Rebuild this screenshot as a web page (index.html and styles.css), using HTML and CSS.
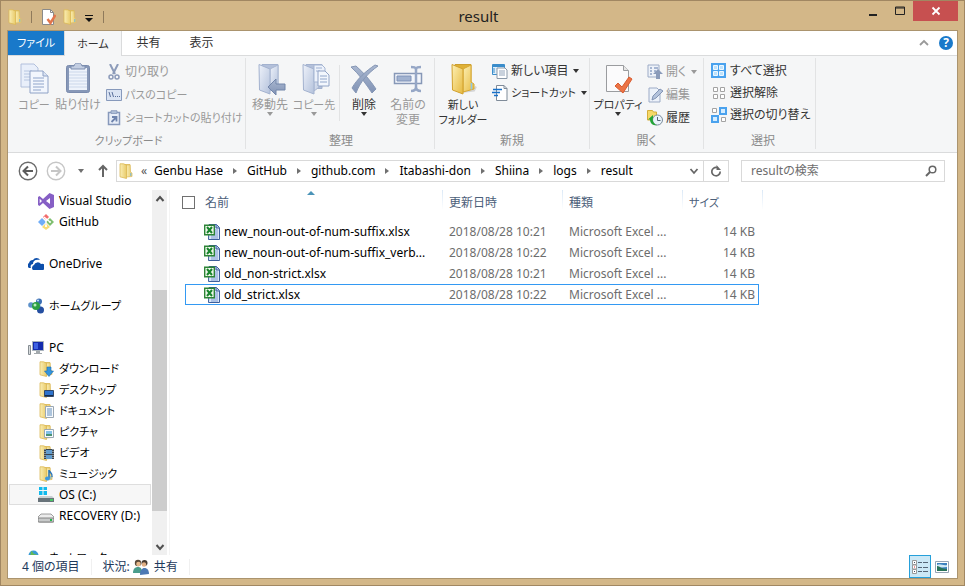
FILE: index.html
```html
<!DOCTYPE html>
<html lang="ja">
<head>
<meta charset="utf-8">
<title>result</title>
<link rel="stylesheet" href="styles.css">
</head>
<body>
<svg class="defs" aria-hidden="true">
  <defs>
    <linearGradient id="gold" x1="0" y1="0" x2="1" y2="1"><stop offset="0" stop-color="#fdf0b4"/><stop offset="1" stop-color="#e6b93f"/></linearGradient>
    <linearGradient id="lemon" x1="0" y1="0" x2="1" y2="0"><stop offset="0" stop-color="#faeeb6"/><stop offset="1" stop-color="#e9cb6a"/></linearGradient>
    <linearGradient id="pale" x1="0" y1="0" x2="1" y2="1"><stop offset="0" stop-color="#eef2fa"/><stop offset="1" stop-color="#b4c2dc"/></linearGradient>
    <linearGradient id="steel" x1="0" y1="0" x2="0" y2="1"><stop offset="0" stop-color="#a9b7d0"/><stop offset="1" stop-color="#8193b5"/></linearGradient>
    <symbol id="folder" viewBox="0 0 16 16">
      <path d="M5 1.500h7v11.500H6z" fill="#e9cb6a" stroke="#d9b650" stroke-width=".8"/>
      <path d="M12 2l.5 7 1.500 1v3.500L8 14V2z" fill="url(#lemon)" stroke="#dfc06a" stroke-width=".8"/>
      <path d="M2 .8h3.500L8.500 2v13.500L2 13.800z" fill="url(#lemon)" stroke="#dcb956" stroke-width=".8"/>
      <path d="M12.800 10v3" stroke="#6fb7e2"/>
    </symbol>
    <symbol id="bigfolder" viewBox="0 0 32 32">
      <path d="M14 29l13-1.500 2-4" fill="none" stroke="#d4d5d6" stroke-width="2"/>
      <path d="M8 1.500h16v22H13z" fill="#dfb136" stroke="#cc9e2f"/>
      <path d="M24 2v17l3 2v5l-11 3V6z" fill="url(#gold)" stroke="#d8a832"/>
      <path d="M5 1.500L16 6v25L5.500 27z" fill="url(#gold)" stroke="#d2a12d"/>
      <path d="M24.500 20v6.500" stroke="#8ac7e8" stroke-width="1.500"/>
    </symbol>
    <symbol id="palefolder" viewBox="0 0 32 32">
      <path d="M8 1.500h16v24H13z" fill="#b3c0da" stroke="#a3b2cf"/>
      <path d="M24 2v20l-8 6V6z" fill="url(#pale)" stroke="#a9b7d2"/>
      <path d="M5 1.500L16 6v25L5.500 27z" fill="url(#pale)" stroke="#a3b2cf"/>
    </symbol>
    <symbol id="excel" viewBox="0 0 16 16">
      <path d="M5 .5h7.500l3 3v12H4.500z" fill="#dbe7fa" stroke="#3d5f9b"/>
      <path d="M12 .5v3.500h3" fill="#a9c1e8" stroke="#3d5f9b"/>
      <path d="M11 6h3M11 8h3M11 10h3M7 12h7M7 14h7" stroke="#7f9dd0"/>
      <path d="M.7 1.200h9.600v9.600H.7z" fill="#f2f9ee" stroke="#2d8437" stroke-width="1.400"/>
      <path d="M3 3l5 6M8 3L3 9" stroke="#18842c" stroke-width="2"/>
    </symbol>
  </defs>
</svg>
<div class="window">
  <header class="titlebar">
    <div class="quick">
      <svg class="i16" viewBox="0 0 16 16"><use href="#folder"/></svg>
      <span class="tick"></span>
      <button aria-label="プロパティ"><svg class="i16" viewBox="0 0 16 16"><path d="M2.500 .5h8l3 3v12h-11z" fill="#fff" stroke="#8a8a8a"/><path d="M10.500 .5v3h3" fill="none" stroke="#8a8a8a"/><path d="M7.500 10l3 4 5-8" fill="none" stroke="#e2764c" stroke-width="2.500"/></svg></button>
      <button aria-label="新しいフォルダー"><svg class="i16" viewBox="0 0 16 16"><use href="#folder"/></svg></button>
      <button aria-label="カスタマイズ"><svg class="qarrow" viewBox="0 0 8 8"><path d="M0 1.500h8" stroke="#111"/><path d="M0 4h8L4 8z" fill="#111"/></svg></button>
      <span class="tick"></span>
    </div>
    <h1>result</h1>
    <div class="controls">
      <button aria-label="最小化"><svg viewBox="0 0 10 10"><path d="M1 9h8" stroke="#222" stroke-width="2"/></svg></button>
      <button aria-label="最大化"><svg viewBox="0 0 10 10"><path d="M.5 1h9v7.500h-9z" fill="none" stroke="#222"/><path d="M0 2h10" stroke="#222"/></svg></button>
      <button class="close" aria-label="閉じる"><svg viewBox="0 0 10 10"><path d="M1.500 1.500l7 7M8.500 1.500l-7 7" stroke="#fff" stroke-width="1.800"/></svg></button>
    </div>
  </header>

  <div class="client">
    <nav class="tabs">
      <button class="tab file">ファイル</button>
      <button class="tab current">ホーム</button>
      <button class="tab">共有</button>
      <button class="tab">表示</button>
      <span class="grow"></span>
      <button class="mini" aria-label="リボンの最小化"><svg viewBox="0 0 10 10"><path d="M1 7l4-4 4 4" fill="none" stroke="#999" stroke-width="1.800"/></svg></button>
      <button class="help" aria-label="ヘルプ">?</button>
    </nav>

    <div class="ribbon">
      <section class="group g-clip">
        <div class="tools">
          <button class="big off kana"><svg viewBox="0 0 32 32"><path d="M3 1h13l4 4v19H3z" fill="#e9effa" stroke="#b2c0dc"/><path d="M6 8h8M6 11h6M6 14h6M6 17h6" stroke="#b6c5e0"/><path d="M12 8h13l5 5v17H12z" fill="#f2f6fd" stroke="#8fa2c6"/><path d="M25 8v5h5" fill="#dbe4f3" stroke="#8fa2c6"/><path d="M15 15h11M15 18h11M15 21h11M15 24h11M15 27h8" stroke="#8fa4ca"/></svg><span>コピー</span></button>
          <button class="big off"><svg viewBox="0 0 32 32"><rect x="4.500" y="2.500" width="23" height="27" rx="2" fill="#8798b8" stroke="#7a8bad"/><path d="M7 5h18v22H7z" fill="#eef3fb"/><path d="M7 9h18M7 12h18M7 15h18M7 18h18M7 21h18M7 24h18" stroke="#cbd7ea"/><path d="M9 3h3c0-4 8-4 8 0h3v3H9z" fill="#c3cee2" stroke="#7f90b1"/></svg><span>貼り付け</span></button>
          <div class="stack">
            <button class="small off"><svg viewBox="0 0 16 16"><path d="M4 0l5 10M12 0L7 10" stroke="#8c9bb9" stroke-width="2"/><circle cx="5" cy="13" r="2" fill="none" stroke="#8c9bb9" stroke-width="1.500"/><circle cx="11" cy="13" r="2" fill="none" stroke="#8c9bb9" stroke-width="1.500"/></svg>切り取り</button>
            <button class="small off kana"><svg viewBox="0 0 16 16"><path d="M.5 2.500h15v11H.5z" fill="#dbe4f3" stroke="#8799bb"/><path d="M3 5l1.500 5M6 5l1.500 5" stroke="#596f9b"/><path d="M9 9.500h1M11 9.500h1M13 9.500h1" stroke="#596f9b"/></svg>パスのコピー</button>
            <button class="small off kana"><svg viewBox="0 0 16 16"><path d="M2.500 2.500h11v12h-11z" fill="#e8eef8" stroke="#8799bb" stroke-width="1.500"/><path d="M5 .8h6v2.500H5z" fill="#bac8df" stroke="#8799bb"/><path d="M5.500 12L10 7.500M6 7h4.500v4.500" fill="none" stroke="#6e83ad" stroke-width="1.800"/></svg>ショートカットの貼り付け</button>
          </div>
        </div>
        <h2>クリップボード</h2>
      </section>

      <section class="group g-org">
        <div class="tools">
          <button class="big off"><svg viewBox="0 0 32 32"><use href="#palefolder"/><path d="M14 24l8-8v5h9v6h-9v5z" fill="url(#steel)" stroke="#7386aa"/></svg><span>移動先</span><i class="caret"></i></button>
          <button class="big off kana"><svg viewBox="0 0 32 32"><use href="#palefolder"/><path d="M16 2h8l3 3v14H16z" fill="#edf2fb" stroke="#a5b5d2"/><path d="M18 5h6M18 8h4" stroke="#9fb1d2"/><path d="M20 8h7l4 4v11H20z" fill="#f3f7fd" stroke="#92a4c6"/><path d="M22 13h7M22 16h7M22 19h7" stroke="#91a6ca"/></svg><span>コピー先</span><i class="caret"></i></button>
          <span class="rule"></span>
          <button class="big"><svg viewBox="0 0 32 32"><path d="M3 4l5-1c8 7 14 14 20 23l-4 4C18 21 11 11 3 4z" fill="url(#steel)" stroke="#8697b5"/><path d="M30 3l-3-1C18 8 9 16 4 25l4 5C12 19 20 10 30 3z" fill="url(#steel)" stroke="#8697b5"/></svg><span>削除</span><i class="caret"></i></button>
          <button class="big off"><svg viewBox="0 0 32 32"><path d="M2.500 10.500h27v10h-27z" fill="#f3f6fb" stroke="#8798b7" stroke-width="1.500"/><path d="M5 13h14v5H5z" fill="#a1b2d0" stroke="#7e92b8"/><path d="M19 4c3 0 5 0 5 3v17c0 3-2 4-5 4M29 4c-3 0-5 0-5 3v17c0 3 2 4 5 4" fill="none" stroke="#96a7c6" stroke-width="2.500"/></svg><span>名前の<br>変更</span></button>
        </div>
        <h2>整理</h2>
      </section>

      <section class="group g-new">
        <div class="tools">
          <button class="big kana"><svg viewBox="0 0 32 32"><use href="#bigfolder"/></svg><span>新しい<br>フォルダー</span></button>
          <div class="stack tight">
            <button class="small"><svg viewBox="0 0 16 16"><path d="M.5 1.500h12v10H.5z" fill="#e0f0fb" stroke="#3a8dcb"/><path d="M1 3h12" stroke="#3a8dcb" stroke-width="2"/><path d="M2 5v5" stroke="#3a8dcb"/><path d="M5 5h8l2 2v8.500H5z" fill="#fff" stroke="#8a98a8"/><path d="M7 8h6M7 10h6M7 12h6" stroke="#92a3b9"/></svg>新しい項目<i class="caret"></i></button>
            <button class="small kana"><svg viewBox="0 0 16 16"><path d="M4.500 .5h7.500l3 3v12H4.500z" fill="#fff" stroke="#7f8b99"/><path d="M12 .5v3h3" fill="none" stroke="#7f8b99"/><path d="M1 4.500h9M0 7.500h8M2 10.500h4" stroke="#1871c9" stroke-width="1.500"/></svg>ショートカット<i class="caret"></i></button>
          </div>
        </div>
        <h2>新規</h2>
      </section>

      <section class="group g-open">
        <div class="tools">
          <button class="big kana"><svg viewBox="0 0 32 32"><path d="M4.500 2.500h17l5 5v21h-22z" fill="#fbfbfc" stroke="#9a9c9f"/><path d="M21.500 2.500v5h5" fill="#e6e6e6" stroke="#9a9c9f"/><path d="M13 23l3-3 4 4 7-10 3 2-9 14z" fill="#ec7446" stroke="#d95c30"/></svg><span>プロパティ</span><i class="caret"></i></button>
          <div class="stack">
            <button class="small off"><svg viewBox="0 0 16 16"><path d="M1 1h11v12H1z" fill="#eef2f9" stroke="#9cabc6"/><path d="M3 4h2M7 4h4M3 7h2M7 7h2M3 10h2" stroke="#8fa2c5" stroke-width="1.500"/><path d="M11 5l5 5h-3v5H9v-5H6z" fill="#8a9bba"/></svg>開く<i class="caret"></i></button>
            <button class="small off"><svg viewBox="0 0 16 16"><path d="M2 1h8l3 3v11H2z" fill="#edf2fa" stroke="#9cabc6"/><path d="M5 13l1-4 7-7 3 2-7 7z" fill="#b4c3dc" stroke="#8294b5"/></svg>編集</button>
            <button class="small"><svg viewBox="0 0 16 16"><path d="M.5 .5h5l1 1.500h3v8h-9z" fill="#f6d968" stroke="#d4ad3a"/><circle cx="10.500" cy="10" r="5" fill="#eaf3fb" stroke="#7b8b9a"/><path d="M10.500 7v3.500h3" fill="none" stroke="#567"/><path d="M6 5v3c-1 3 1 6 4 7.500-5 0-7-3-7-6H1z" fill="#23a536"/></svg>履歴</button>
          </div>
        </div>
        <h2>開く</h2>
      </section>

      <section class="group g-sel">
        <div class="tools">
          <div class="stack tight">
            <button class="small"><svg viewBox="0 0 16 16"><path d="M0 0h15v15H0z" fill="#4aa2ee"/><path d="M2.500 2.500h4v4h-4zM8.500 2.500h4v4h-4zM2.500 8.500h4v4h-4zM8.500 8.500h4v4h-4z" fill="#bfe2fb" stroke="#eef8ff"/></svg>すべて選択</button>
            <button class="small"><svg viewBox="0 0 16 16"><path d="M2.500 2.500h4v4h-4zM9.500 2.500h4v4h-4zM2.500 9.500h4v4h-4zM9.500 9.500h4v4h-4z" fill="#fff" stroke="#a3a3a3"/></svg>選択解除</button>
            <button class="small"><svg viewBox="0 0 16 16"><path d="M1.500 1.500h4v4h-4zM10.500 10.500h4v4h-4z" fill="#fff" stroke="#a3a3a3"/><path d="M9 1h6v6H9zM1 9h6v6H1z" fill="#d5edff" stroke="#4aa2ee" stroke-width="2"/></svg>選択の切り替え</button>
          </div>
        </div>
        <h2>選択</h2>
      </section>
    </div>

    <div class="navbar">
      <button class="nav" aria-label="戻る"><svg viewBox="0 0 20 20"><circle cx="10" cy="10" r="8.700" fill="none" stroke="#6a6a6a" stroke-width="1.400"/><path d="M15 10H6M10 5.500L5.500 10l4.500 4.500" fill="none" stroke="#5c5c5c" stroke-width="2"/></svg></button>
      <button class="nav" aria-label="進む"><svg viewBox="0 0 20 20"><circle cx="10" cy="10" r="8.700" fill="none" stroke="#c6c6c6" stroke-width="1.400"/><path d="M5 10h9M10 5.500l4.500 4.500-4.500 4.500" fill="none" stroke="#c6c6c6" stroke-width="2"/></svg></button>
      <button class="hist" aria-label="最近表示した場所"><i class="caret"></i></button>
      <button class="up" aria-label="上へ"><svg viewBox="0 0 12 14"><path d="M6 13V2M2 6l4-4 4 4" fill="none" stroke="#666" stroke-width="2"/></svg></button>
      <div class="address">
        <svg class="i16" viewBox="0 0 16 16"><use href="#folder"/></svg>
        <span class="more">«</span>
        <ol class="crumbs">
          <li><a href="#">Genbu Hase</a></li><li><a href="#">GitHub</a></li><li><a href="#">github.com</a></li><li><a href="#">Itabashi-don</a></li><li><a href="#">Shiina</a></li><li><a href="#">logs</a></li><li><a href="#">result</a></li>
        </ol>
        <button class="drop" aria-label="履歴"><svg viewBox="0 0 10 10"><path d="M1.500 3L5 7l3.500-4" fill="none" stroke="#666" stroke-width="1.800"/></svg></button>
        <button class="reload" aria-label="更新"><svg viewBox="0 0 12 12"><path d="M7 2.500A4.200 4.200 0 1 0 10.200 6.500" fill="none" stroke="#666" stroke-width="1.700"/><path d="M6.500 0v5H11z" fill="#666"/></svg></button>
      </div>
      <label class="search">
        <input type="search" placeholder="resultの検索" aria-label="resultの検索">
        <svg viewBox="0 0 12 12"><circle cx="7.500" cy="4.500" r="3.300" fill="none" stroke="#666" stroke-width="1.500"/><path d="M5 7L1 11" stroke="#666" stroke-width="2"/></svg>
      </label>
    </div>

    <div class="main">
      <nav class="side">
        <ul class="tree">
          <li class="sub"><svg viewBox="0 0 16 16"><path d="M11.500 0L16 2v12l-4.500 2L5 10l-3.500 3L0 12V4l1.500-1L5 6zM1.700 5.800v4.400L4 8zM12 5L8 8l4 3z" fill="#865fc5" fill-rule="evenodd"/></svg>Visual Studio</li>
          <li class="sub"><svg viewBox="0 0 16 16"><path d="M8 0l3 3-3 3-3-3z" fill="#f26d6d"/><path d="M4 4l4 4-4 4-4-4z" fill="#70adf8"/><path d="M12 4l4 4-4 4-4-4z" fill="#7fbf70"/><path d="M8 9l4 4-4 3-4-3z" fill="#f8dc76"/><path d="M6 3l6 5M8 5v8" stroke="#fff" stroke-width="1.200"/><circle cx="8" cy="12" r="1" fill="#fff"/><circle cx="12" cy="8" r="1" fill="#fff"/></svg>GitHub</li>
          <li class="space"></li>
          <li><svg viewBox="0 0 16 16"><path d="M1 12a3 3 0 0 1 0-5 4 4 0 0 1 4-3 4 4 0 0 1 7 0c-5-1-7 1-7 4-2 0-3 2-2 4z" fill="#0c4eab"/><path d="M5 14a3 3 0 0 1 1-5 4 4 0 0 1 7-1 3 3 0 0 1 2 6z" fill="#0c4eab"/></svg>OneDrive</li>
          <li class="space"></li>
          <li class="kana"><svg viewBox="0 0 16 16"><path d="M3 8l8-5 2 9z" fill="none" stroke="#b6d7ee" stroke-width="2"/><circle cx="11" cy="3.500" r="3" fill="#3b6fb4"/><circle cx="3" cy="7" r="2.800" fill="#5d91ca"/><circle cx="12.500" cy="12" r="3.500" fill="#254fa1"/><circle cx="8" cy="8" r="4" fill="#2d9f43"/><circle cx="7" cy="7" r="1.500" fill="#b9edbe"/><circle cx="10" cy="2.500" r="1" fill="#c7e3fa"/></svg>ホームグループ</li>
          <li class="space"></li>
          <li><svg viewBox="0 0 16 16"><path d="M4.500 1.500h11v9h-11z" fill="#142bad" stroke="#a9b3bb"/><path d="M6 3h4v6H6z" fill="#3e60e1"/><path d="M8 11h4v2h2v1H6v-1h2z" fill="#a3a9ad"/><path d="M.5 5.500h2v9h-2z" fill="#d9dddf" stroke="#868d92"/></svg>PC</li>
          <li class="sub kana"><svg viewBox="0 0 16 16"><use href="#folder"/><path d="M9 6h4v4h2.500L11 15.500 6.500 10H9z" fill="#3695dc" stroke="#1d6eb4" stroke-width=".6"/></svg>ダウンロード</li>
          <li class="sub kana"><svg viewBox="0 0 16 16"><use href="#folder"/><path d="M6.500 8.500h9v6h-9z" fill="#2e73cd" stroke="#344a68"/><path d="M7 13.500h8" stroke="#172d4b"/></svg>デスクトップ</li>
          <li class="sub kana"><svg viewBox="0 0 16 16"><use href="#folder"/><path d="M7.500 3.500h8v11h-8z" fill="#f8fafc" stroke="#9aa7b3"/><path d="M9 6h5M9 8h5M9 10h5M9 12h5" stroke="#628fbd"/></svg>ドキュメント</li>
          <li class="sub kana"><svg viewBox="0 0 16 16"><use href="#folder"/><path d="M6.500 5.500h9v8h-9z" fill="#f8fafc" stroke="#9aa7b3"/><path d="M8 7h6v3H8z" fill="#82c1e8"/><path d="M8 10h6v2H8z" fill="#4a9272"/></svg>ピクチャ</li>
          <li class="sub kana"><svg viewBox="0 0 16 16"><use href="#folder"/><path d="M6 4h10v10H6z" fill="#39444d"/><path d="M8 5h6v4H8zM8 10h6v4H8z" fill="#629ccd"/><path d="M7 4v10M15 4v10" stroke="#d9dfe3" stroke-dasharray="1 1"/></svg>ビデオ</li>
          <li class="sub kana"><svg viewBox="0 0 16 16"><use href="#folder"/><path d="M11 4c0 2 4 3 3 7M11 4v8" fill="none" stroke="#2674bb" stroke-width="1.500"/><ellipse cx="9.500" cy="12.500" rx="2.500" ry="2" fill="#3b99df"/></svg>ミュージック</li>
          <li class="sub picked"><svg viewBox="0 0 16 16"><path d="M1 0h3.500v3H1zM5.500 0H9v3H5.500zM1 4h3.500v4H1zM5.500 4H9v4H5.500z" fill="#11b9ed"/><path d="M2 9h12l2 2v3.500H0V11z" fill="#cad0d3"/><path d="M0 11h16v4H0z" fill="#68737a"/><path d="M12 13h3" stroke="#3ee060" stroke-width="1.500"/></svg>OS (C:)</li>
          <li class="sub"><svg viewBox="0 0 16 16"><path d="M3 6h10l3 3v4c0 1-1 1-2 1H2c-1 0-2 0-2-1V9z" fill="#ececec" stroke="#898989" stroke-width=".8"/><path d="M0 10h16v3c0 1-1 1-2 1H2c-1 0-2 0-2-1z" fill="#c8caca" stroke="#6e6e6e" stroke-width=".8"/><path d="M12 12h2" stroke="#25b84b" stroke-width="2"/></svg>RECOVERY (D:)</li>
          <li class="space"></li>
          <li class="kana"><svg viewBox="0 0 16 16"><circle cx="5.500" cy="5.500" r="5" fill="#389bd5"/><path d="M3 1c3 1 2 4 5 3l2 4H2z" fill="#65b957"/><path d="M7.500 5.500h8v6h-8z" fill="#2655c0" stroke="#a7b4bf"/></svg>ネットワーク</li>
        </ul>
        <div class="scroll">
          <button aria-label="上へスクロール"><svg viewBox="0 0 10 10"><path d="M1.500 7L5 3l3.500 4" fill="none" stroke="#505050" stroke-width="2"/></svg></button>
          <div class="track"><div class="thumb"></div></div>
          <button aria-label="下へスクロール"><svg viewBox="0 0 10 10"><path d="M1.500 3L5 7l3.500-4" fill="none" stroke="#505050" stroke-width="2"/></svg></button>
        </div>
      </nav>
      <div class="files">
        <table>
          <colgroup><col class="c-name"><col class="c-mid"><col class="c-mid"><col class="c-size"></colgroup>
          <thead>
            <tr><th><span class="head"><input type="checkbox" aria-label="すべて選択">名前</span><i class="sort"></i></th><th>更新日時</th><th>種類</th><th class="kana">サイズ</th></tr>
          </thead>
          <tbody>
            <tr><td><svg viewBox="0 0 16 16"><use href="#excel"/></svg>new_noun-out-of-num-suffix.xlsx</td><td>2018/08/28 10:21</td><td>Microsoft Excel ...</td><td>14 KB</td></tr>
            <tr><td><svg viewBox="0 0 16 16"><use href="#excel"/></svg>new_noun-out-of-num-suffix_verb...</td><td>2018/08/28 10:22</td><td>Microsoft Excel ...</td><td>14 KB</td></tr>
            <tr><td><svg viewBox="0 0 16 16"><use href="#excel"/></svg>old_non-strict.xlsx</td><td>2018/08/28 10:21</td><td>Microsoft Excel ...</td><td>14 KB</td></tr>
            <tr class="focus"><td><svg viewBox="0 0 16 16"><use href="#excel"/></svg>old_strict.xlsx</td><td>2018/08/28 10:22</td><td>Microsoft Excel ...</td><td>14 KB</td></tr>
          </tbody>
        </table>
      </div>
    </div>

    <footer class="status">
      <span class="count">4 個の項目</span>
      <span class="state">状況:<svg viewBox="0 0 16 16"><circle cx="5" cy="4" r="3.200" fill="#5a4a3a"/><circle cx="5.500" cy="5" r="2.300" fill="#e7b98c"/><path d="M0 14c0-4 2-6 5-6s4 2 4 6z" fill="#4a9d8c"/><circle cx="11.500" cy="4" r="3" fill="#473b31"/><circle cx="11" cy="5.500" r="2.200" fill="#e2b085"/><path d="M7 16c0-5 2-7 4.500-7s4.500 2 4.500 6z" fill="#4c79b4"/></svg><span>共有</span></span>
      <span class="grow"></span>
      <button class="view on" aria-label="詳細"><svg viewBox="0 0 16 14"><path d="M.5.5h4v4h-4zM.5 5h4v4h-4zM.5 9.500h4v4h-4z" fill="#fff" stroke="#999"/><path d="M2 2.500h1M2 11.500h1" stroke="#456"/><path d="M2 7h1" stroke="#d22"/><path d="M6 2.500h4M11 2.500h5M6 7.500h4M11 7.500h5M6 11.500h4M11 11.500h5" stroke="#556677"/></svg></button>
      <button class="view" aria-label="大アイコン"><svg viewBox="0 0 16 14"><path d="M1.500 1.500h13v11h-13z" fill="#fff" stroke="#96a4b5"/><path d="M3 3h10v8H3z" fill="#3b80bd"/><path d="M3 5c3-2 6 1 10 0v2L3 8z" fill="#cfe8f4"/><path d="M3 6c3 0 4 3 10 3v2H3z" fill="#297358"/></svg></button>
    </footer>
  </div>
</div>
</body>
</html>
```
FILE: styles.css
```css
* { box-sizing: border-box; }
body {
  margin: 0;
  font: 12px/16px "Noto Sans", "Noto Sans CJK JP", sans-serif;
  font-feature-settings: "palt";
  color: #000;
}
button, input { font: inherit; font-feature-settings: inherit; color: inherit; }
button { display: flex; align-items: center; justify-content: center; border: 0; padding: 0; background: none; white-space: nowrap; }
svg { display: block; flex: none; }
a { color: inherit; text-decoration: none; }
h1, h2, ul, ol { margin: 0; padding: 0; font-weight: normal; list-style: none; }
.defs { position: absolute; width: 0; height: 0; }
.grow { flex: 1; }
.i16 { width: 16px; height: 16px; }
.kana { font-size: 11px; }

.window { display: flex; flex-direction: column; height: 100vh; padding: 0 6px 6px; border: 1px solid #a18762; background: #d3b788; }
.titlebar { display: grid; grid-template-columns: 1fr auto 1fr; height: 29px; flex: none; }
.quick { display: flex; align-items: center; gap: 6px; }
.tick { width: 1px; height: 12px; margin: 0 2px; background: #8f7a5b; }
.qarrow { width: 8px; height: 8px; margin: 3px 2px 0 1px; }
.titlebar h1 { padding-right: 8px; font-size: 15px; line-height: 31px; color: #222; }
.controls { display: flex; justify-content: flex-end; height: 20px; }
.controls button { width: 27px; }
.controls svg { width: 10px; height: 10px; }
.controls .close { width: 45px; background: #c75050; }

.client { display: flex; flex-direction: column; flex: 1; min-height: 0; border: 1px solid #ab946e; background: #fff; }
.tabs { display: flex; flex: none; height: 25px; border-bottom: 1px solid #dadbdc; color: #333; }
.tab { width: 53px; height: 24px; }
.tab.file { width: 56px; background: #1979ca; color: #fff; font-size: 11px; }
.tab.current { width: 58px; height: 25px; border: solid #dadbdc; border-width: 0 1px; background: #f5f6f7; font-size: 11px; }
.mini { width: 22px; }
.mini svg { width: 10px; height: 10px; }
.help { align-self: center; width: 14px; height: 14px; margin: 0 4px; border-radius: 50%; background: #1979ca; color: #fff; font-weight: bold; }

.ribbon { display: flex; flex: none; height: 97px; padding: 2px 0; border-bottom: 1px solid #dadbdc; background: #f5f6f7; }
.group { display: flex; flex-direction: column; height: 91px; border-right: 1px solid #e2e3e4; color: #333; }
.group h2 { font-size: 12px; line-height: 16px; text-align: center; color: #8b8b8b; }
.g-clip h2 { font-size: 11px; }
.tools { display: flex; flex: 1; padding-top: 5px; }
.g-clip { width: 238px; padding-left: 4px; }
.g-org { width: 189px; padding-left: 2px; }
.g-new { width: 155px; }
.g-open { width: 114px; }
.g-sel { width: 112px; padding-left: 7px; }
.big { flex-direction: column; justify-content: flex-start; width: 44px; line-height: 15px; }
.big svg { width: 32px; height: 32px; margin-bottom: 2px; }
.off { color: #999; }
.caret { flex: none; border: solid transparent; border-width: 4px 3px 0; border-top-color: currentColor; }
.small .caret { margin-left: 2px; }
.g-new .big, .g-open .big { width: 56px; }
.stack { display: flex; flex-direction: column; align-items: flex-start; margin-top: -3px; padding-left: 6px; }
.stack .small { height: 23px; }
.stack.tight .small { height: 22px; }
.g-new .stack, .g-open .stack { padding-left: 1px; }
.g-sel .stack { padding-left: 0; }
.small { gap: 3px; }
.small svg { width: 16px; height: 16px; }
.rule { width: 1px; height: 56px; margin: 2px 2px 0 3px; background: #e2e3e4; }

.navbar { display: flex; flex: none; align-items: center; height: 37px; padding: 0 12px 2px 10px; }
.nav svg { width: 20px; height: 20px; }
.nav + .nav { margin-left: 8px; }
.hist { width: 30px; color: #707070; }
.up { width: 14px; margin-right: 6px; }
.up svg { width: 12px; height: 14px; }
.address { display: flex; flex: 1; align-items: center; height: 22px; padding-left: 1px; border: 1px solid #d9d9d9; }
.more { margin: 0 7px; color: #555; }
.crumbs { display: flex; flex: 1; }
.crumbs li { display: flex; align-items: center; }
.crumbs li + li::before { content: ""; margin: 0 10px; border: solid transparent; border-width: 3px 0 3px 4px; border-left-color: #707070; }
.drop { width: 18px; }
.drop svg { width: 10px; height: 10px; }
.reload { width: 25px; height: 20px; border-left: 1px solid #d9d9d9; }
.reload svg { width: 12px; height: 12px; }
.search { display: flex; flex: 0 0 202px; align-items: center; height: 22px; margin-left: 12px; padding: 0 7px 0 9px; border: 1px solid #d9d9d9; }
.search input { flex: 1; min-width: 0; padding: 0; border: 0; outline: 0; background: none; }
.search input::placeholder { color: #6d6d6d; }
.search svg { width: 12px; height: 12px; }

.main { display: flex; flex: 1; min-height: 0; }
.side { display: flex; flex: none; width: 162px; border-right: 1px solid #f4f4f4; }
.tree { flex: 1; min-width: 0; padding-left: 1px; overflow: hidden; white-space: nowrap; }
.tree li { display: flex; align-items: center; gap: 5px; height: 21px; padding-left: 19px; }
.tree .sub { padding-left: 29px; }
.tree svg { width: 16px; height: 16px; }
.tree .picked { padding-left: 28px; border: 1px solid #dedede; background: #f7f7f7; }
.scroll { display: flex; flex-direction: column; width: 15px; margin: 0 2px 0 1px; background: #f0f0f0; }
.scroll button { height: 17px; }
.scroll svg { width: 10px; height: 10px; }
.track { display: flex; flex: 1; flex-direction: column; padding: 83px 0 27px; }
.thumb { flex: 1; background: #cdcdcd; }

.files { flex: 1; min-width: 0; padding-left: 12px; overflow: hidden; }
table { width: 581px; table-layout: fixed; border-collapse: separate; border-spacing: 0; color: #6d6d6d; }
.c-name { width: 261px; }
.c-mid { width: 120px; }
.c-size { width: 80px; }
th, td { height: 21px; padding: 0 0 0 6px; text-align: left; font-weight: normal; white-space: nowrap; }
th { position: relative; height: 31px; padding-bottom: 6px; color: #4c607a; background: linear-gradient(#dbe9f7, #fff) right top / 1px 20px no-repeat; }
th:first-child { padding-left: 0; }
.head { display: flex; align-items: center; }
.head input { appearance: none; width: 13px; height: 13px; margin: 0 10px 0 0; border: 1px solid #707070; background: #fff; }
.sort { position: absolute; left: 48%; top: 1px; border: solid transparent; border-width: 0 4px 4px; border-bottom-color: #4b94b8; }
td:first-child { display: flex; align-items: center; gap: 4px; padding-left: 22px; color: #000; }
td:last-child { padding-right: 8px; text-align: right; }
td svg { width: 16px; height: 16px; }
.focus { position: relative; }
.focus::after { content: ""; position: absolute; inset: 0 4px 0 3px; border: 1px solid #3399f3; }

.status { display: flex; flex: none; align-items: center; height: 23px; padding: 0 4px 0 14px; color: #1e395b; }
.count { padding-right: 11px; border-right: 1px solid #f0f0f0; }
.state { display: flex; align-items: center; padding: 0 11px; border-right: 1px solid #f0f0f0; }
.state svg { width: 16px; height: 16px; margin: 0 5px 0 3px; }
.view { width: 22px; height: 23px; }
.view.on { border: 1px solid #26a0da; background: #cbe8f6; }
.view svg { width: 16px; height: 14px; }
```
